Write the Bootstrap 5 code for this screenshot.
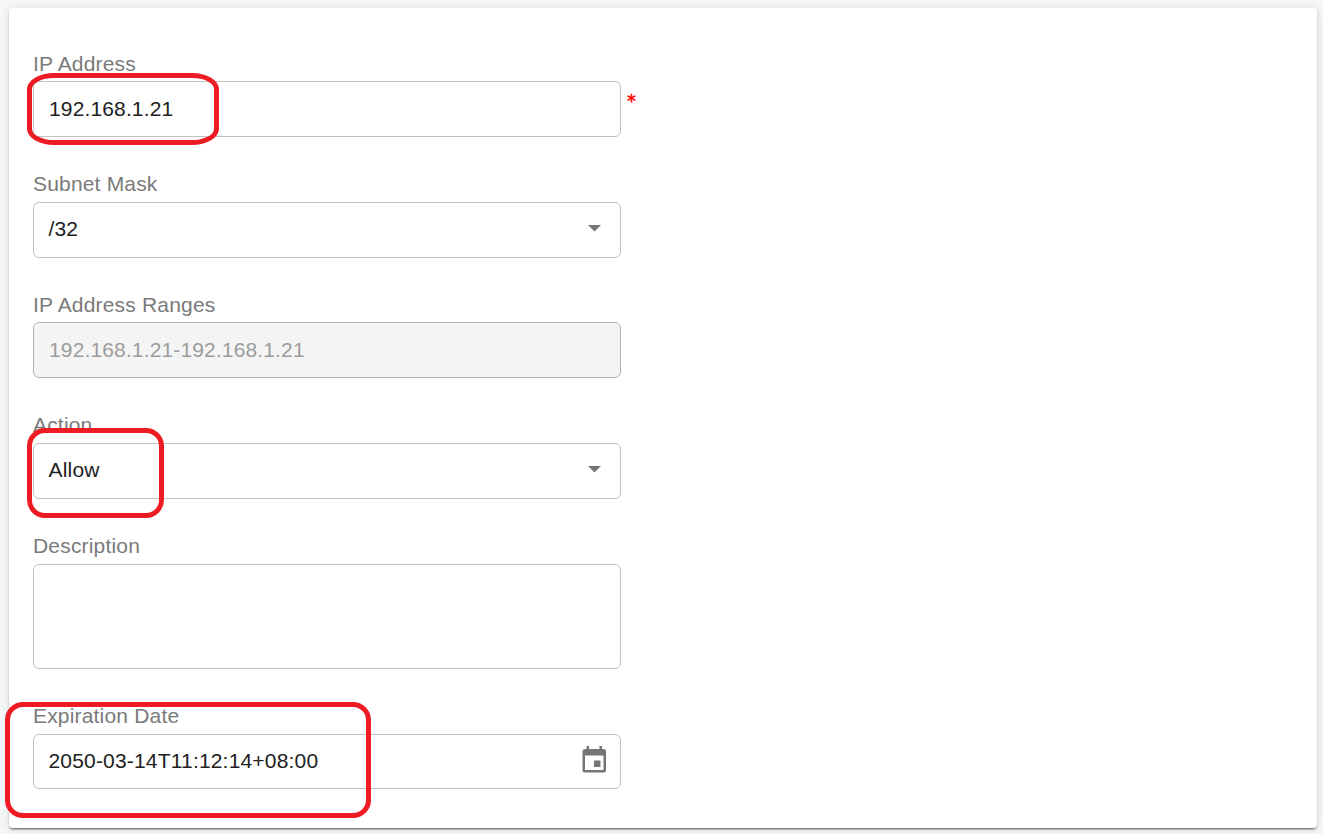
<!DOCTYPE html>
<html lang="en">
<head>
<meta charset="utf-8">
<meta name="viewport" content="width=device-width, initial-scale=1">
<title>IP Address Rule</title>
<link href="https://cdn.jsdelivr.net/npm/bootstrap@5.3.0/dist/css/bootstrap.min.css" rel="stylesheet">
<style>
  body { background: #f5f6f8; font-family: "Liberation Sans", Arial, sans-serif; font-size: 21px; line-height: 31px; height: 834px; overflow: hidden; color: #212121; }
  .panel { margin: 8px 6px 0 9px; height: 820px; border-radius: 4px; padding: 40px 24px 0; box-shadow: 0 3px 1px -2px rgba(0,0,0,.2), 0 2px 2px 0 rgba(0,0,0,.14), 0 1px 8px 0 rgba(0,0,0,.12), 0 2px 2px -1px rgba(0,0,0,.3); }
  .entry { position: relative; width: 588px; margin-bottom: 31px; }
  .entry-label { display: block; height: 34px; color: #7a7a7a; letter-spacing: .18px; white-space: nowrap; }
  .entry-label.snug { height: 33px; }
  .box { height: 56px; padding: 0 12px 2px 14.5px; border: 1px solid #c2c2c2; border-radius: 6px; font-size: 21px; line-height: 31px; color: #212121; letter-spacing: .18px; }
  .box.address { padding-left: 15px; letter-spacing: .14px; }
  .box.locked { background: #f4f4f4; border-color: #b5b5b5; color: #9c9c9c; }
  .box.choice { padding-bottom: 4px; }
  .box.tall { height: 105px; }
  .box.date { height: 55px; padding-right: 11.5px; }
  .calendar { margin-bottom: 2px; }
  .caret { width: 13px; height: 7px; margin-right: 7px; }
  .required { position: absolute; left: 594px; top: 37px; color: #f00; font-size: 18px; line-height: 31px; font-family: "DejaVu Sans", sans-serif; -webkit-text-stroke: .5px #f00; }
  .ring { position: absolute; border: 5px solid #ed1c24; pointer-events: none; }
  .ring-ip { left: -6px; top: 25px; width: 192px; height: 72px; border-radius: 27px / 16px; }
  .ring-action { left: -6px; top: 19px; width: 137px; height: 90px; border-radius: 18px; }
  .ring-date { left: -28px; top: 2px; width: 366px; height: 116px; border-radius: 18px; }
</style>
</head>
<body>
<main class="panel bg-white">
  <div class="entry">
    <span class="entry-label snug">IP Address</span>
    <div class="form-control box address d-flex align-items-center">192.168.1.21</div>
    <span class="required">*</span>
    <div class="ring ring-ip"></div>
  </div>
  <div class="entry">
    <span class="entry-label">Subnet Mask</span>
    <div class="form-control box choice d-flex align-items-center justify-content-between">/32
      <svg class="caret" viewBox="0 0 13 7"><path d="M0 0h13L6.5 6.5z" fill="#757575"/></svg>
    </div>
  </div>
  <div class="entry">
    <span class="entry-label snug">IP Address Ranges</span>
    <div class="form-control box address locked d-flex align-items-center">192.168.1.21-192.168.1.21</div>
  </div>
  <div class="entry">
    <span class="entry-label">Action</span>
    <div class="form-control box choice d-flex align-items-center justify-content-between">Allow
      <svg class="caret" viewBox="0 0 13 7"><path d="M0 0h13L6.5 6.5z" fill="#757575"/></svg>
    </div>
    <div class="ring ring-action"></div>
  </div>
  <div class="entry">
    <span class="entry-label">Description</span>
    <div class="form-control box tall"></div>
  </div>
  <div class="entry">
    <span class="entry-label">Expiration Date</span>
    <div class="form-control box date d-flex align-items-center justify-content-between">2050-03-14T11:12:14+08:00
      <svg class="calendar" width="28" height="28" viewBox="0 0 28 28"><path fill="#757575" fill-rule="evenodd" d="M5.500 0h2.500v3h10.500V0H21v3h1.500A2.500 2.500 0 0 1 25 5.500v18.500a2.500 2.500 0 0 1-2.500 2.500h-18.500A2.500 2.500 0 0 1 1.500 24V5.500A2.500 2.500 0 0 1 4 3h1.500zM4 9.500V24h18.500V9.500zM13 14.500h6.500v6.500H13z"/></svg>
    </div>
    <div class="ring ring-date"></div>
  </div>
</main>
<script src="https://cdn.jsdelivr.net/npm/bootstrap@5.3.0/dist/js/bootstrap.bundle.min.js"></script>
</body>
</html>
